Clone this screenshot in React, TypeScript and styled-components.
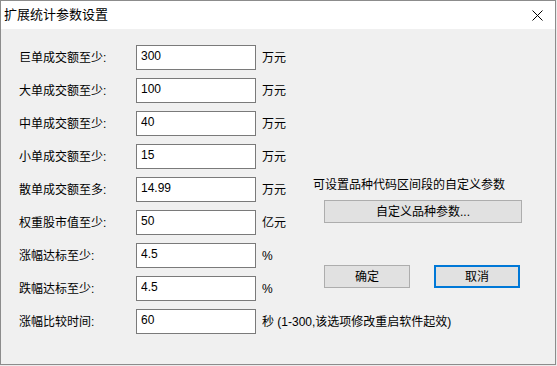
import React from "react";
import styled, { createGlobalStyle } from "styled-components";

const GlobalStyle = createGlobalStyle`
  html, body { margin: 0; padding: 0; background: #ececec; }
  body {
    font-family: "Liberation Sans", "Noto Sans CJK SC", sans-serif;
    font-size: 12px;
    color: #000;
  }
`;

const Window = styled.div`
  box-sizing: border-box;
  width: 556px;
  height: 365px;
  border: 1px solid #8c8c8c;
  background: #f0f0f0;
  display: flex;
  flex-direction: column;
`;

const TitleBar = styled.div`
  height: 28px;
  background: #fff;
  display: flex;
  align-items: center;
  justify-content: space-between;
  flex-shrink: 0;
`;

const Title = styled.div`
  padding-left: 3px;
  font-size: 13px;
  line-height: 16px;
`;

const CloseButton = styled.div`
  width: 36px;
  height: 28px;
  display: flex;
  align-items: center;
  justify-content: center;
`;

const Body = styled.div`
  padding: 16px 0 0 18px;
`;

const FormGrid = styled.div`
  display: grid;
  grid-template-columns: 117px 126px 51px 1fr;
  grid-auto-rows: 25px;
  row-gap: 8px;
`;

const Label = styled.div<{ $row: number }>`
  grid-column: 1;
  grid-row: ${(p) => p.$row};
  display: flex;
  align-items: center;
  white-space: nowrap;
  line-height: 16px;
`;

const Field = styled.input<{ $row: number }>`
  grid-column: 2;
  grid-row: ${(p) => p.$row};
  box-sizing: border-box;
  width: 120px;
  height: 25px;
  margin: 0;
  border: 1px solid #7a7a7a;
  background: #fff;
  padding: 3px 4px 7px;
  font-family: "Liberation Sans", "Noto Sans CJK SC", sans-serif;
  font-size: 12px;
  line-height: 13px;
  color: #000;
  outline: none;
`;

const Unit = styled.div<{ $row: number; $wide?: boolean }>`
  grid-column: ${(p) => (p.$wide ? "3 / span 2" : "3")};
  grid-row: ${(p) => p.$row};
  display: flex;
  align-items: center;
  white-space: nowrap;
  line-height: 16px;
`;

const SidePanel = styled.div`
  grid-column: 4;
  grid-row: 5 / span 4;
  display: flex;
  flex-direction: column;
  align-items: flex-start;
`;

const Hint = styled.div`
  margin-top: 1px;
  line-height: 14px;
  white-space: nowrap;
`;

const Button = styled.button<{ $width: number; $primary?: boolean }>`
  box-sizing: border-box;
  width: ${(p) => p.$width}px;
  height: 23px;
  margin: 0;
  padding: 0;
  background: #e1e1e1;
  border: ${(p) => (p.$primary ? "2px solid #0078d7" : "1px solid #adadad")};
  font-family: "Liberation Sans", "Noto Sans CJK SC", sans-serif;
  font-size: 12px;
  line-height: 14px;
  color: #000;
`;

const WideButton = styled(Button)`
  margin: 8px 0 0 11px;
`;

const ButtonRow = styled.div`
  display: flex;
  gap: 24px;
  margin: 42px 0 0 11px;
`;

const fields: { label: string; value: string; unit: string }[] = [
  { label: "巨单成交额至少:", value: "300", unit: "万元" },
  { label: "大单成交额至少:", value: "100", unit: "万元" },
  { label: "中单成交额至少:", value: "40", unit: "万元" },
  { label: "小单成交额至少:", value: "15", unit: "万元" },
  { label: "散单成交额至多:", value: "14.99", unit: "万元" },
  { label: "权重股市值至少:", value: "50", unit: "亿元" },
  { label: "涨幅达标至少:", value: "4.5", unit: "%" },
  { label: "跌幅达标至少:", value: "4.5", unit: "%" },
  { label: "涨幅比较时间:", value: "60", unit: "秒 (1-300,该选项修改重启软件起效)" },
];

export default function App() {
  return (
    <>
      <GlobalStyle />
      <Window>
        <TitleBar>
          <Title>扩展统计参数设置</Title>
          <CloseButton>
            <svg width="11" height="11" viewBox="0 0 11 11">
              <path d="M0.5 0.5 L10.5 10.5 M10.5 0.5 L0.5 10.5" stroke="#000" strokeWidth="1" fill="none" />
            </svg>
          </CloseButton>
        </TitleBar>
        <Body>
          <FormGrid>
            {fields.map((f, i) => (
              <React.Fragment key={i}>
                <Label $row={i + 1}>{f.label}</Label>
                <Field $row={i + 1} defaultValue={f.value} />
                <Unit $row={i + 1} $wide={i === fields.length - 1}>
                  {f.unit}
                </Unit>
              </React.Fragment>
            ))}
            <SidePanel>
              <Hint>可设置品种代码区间段的自定义参数</Hint>
              <WideButton $width={198}>自定义品种参数...</WideButton>
              <ButtonRow>
                <Button $width={86}>确定</Button>
                <Button $width={86} $primary>取消</Button>
              </ButtonRow>
            </SidePanel>
          </FormGrid>
        </Body>
      </Window>
    </>
  );
}
